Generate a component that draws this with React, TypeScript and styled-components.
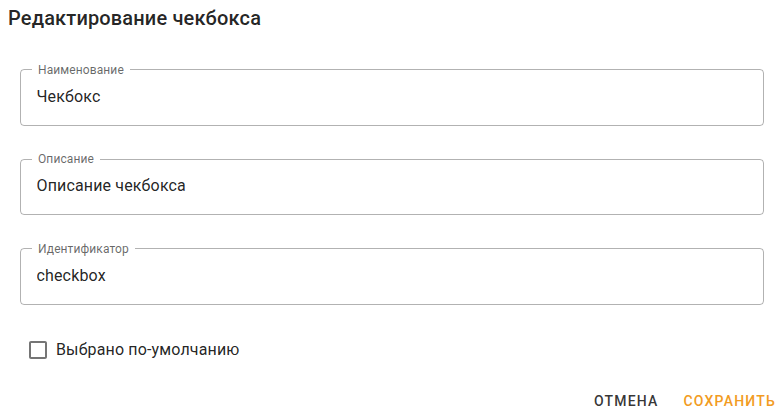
import React from 'react';
import styled, { createGlobalStyle } from 'styled-components';

const FONT = `Roboto, 'Noto Sans', 'Liberation Sans', sans-serif`;
const TEXT = 'rgba(0, 0, 0, 0.87)';
const ACCENT = '#f29b22';

const GlobalStyle = createGlobalStyle`
  html, body {
    margin: 0;
    padding: 0;
    background: #ffffff;
  }
  body {
    font-family: ${FONT};
    color: ${TEXT};
  }
`;

const Dialog = styled.div`
  width: 784px;
  height: 418px;
  display: flex;
  flex-direction: column;
  box-sizing: border-box;
  overflow: hidden;
`;

const Title = styled.h2`
  margin: 0;
  padding: 2px 8px 0;
  font-size: 20px;
  font-weight: 500;
  line-height: 32px;
  letter-spacing: 0.15px;
  color: ${TEXT};
`;

const Content = styled.div`
  display: flex;
  flex-direction: column;
  gap: 27.5px;
  padding: 29.5px 20px 0;
`;

const Field = styled.fieldset`
  margin: 0;
  padding: 0 13px 0 11px;
  min-width: 0;
  border: 1px solid rgba(0, 0, 0, 0.3);
  border-radius: 4px;
`;

const Legend = styled.legend`
  padding: 0 6px;
  font-size: 12px;
  line-height: 12px;
  color: rgba(0, 0, 0, 0.6);
  letter-spacing: 0.1px;
`;

const Input = styled.input`
  display: block;
  width: 100%;
  box-sizing: content-box;
  margin: 0;
  padding: 9px 0 17px 4.5px;
  height: 23px;
  border: 0;
  outline: none;
  background: transparent;
  font-family: ${FONT};
  font-size: 16px;
  line-height: 23px;
  color: ${TEXT};
  letter-spacing: 0.15px;
`;

const CheckRow = styled.label`
  display: flex;
  align-items: center;
  gap: 6px;
  margin: 33.5px 0 0 26px;
  height: 24px;
  font-size: 16px;
  line-height: 24px;
  letter-spacing: 0.15px;
  color: ${TEXT};
  cursor: pointer;
`;

const Actions = styled.div`
  display: flex;
  justify-content: flex-end;
  gap: 9px;
  padding: 27px 0 0 0;
`;

const Button = styled.button<{ $accent?: boolean }>`
  border: 0;
  background: transparent;
  padding: 0 8px;
  margin: 0;
  height: 24.5px;
  font-family: ${FONT};
  font-size: 14px;
  font-weight: 500;
  line-height: 24.5px;
  letter-spacing: 1.2px;
  text-transform: uppercase;
  color: ${(p) => (p.$accent ? ACCENT : 'rgba(0, 0, 0, 0.8)')};
  cursor: pointer;
`;

function CheckboxIcon() {
  return (
    <svg width="24" height="24" viewBox="0 0 24 24" fill="rgba(0,0,0,0.54)">
      <path d="M19 5v14H5V5h14m0-2H5c-1.11 0-2 .9-2 2v14c0 1.1.89 2 2 2h14c1.1 0 2-.9 2-2V5c0-1.1-.9-2-2-2z" />
    </svg>
  );
}

function TextField({ label, value }: { label: string; value: string }) {
  return (
    <Field>
      <Legend>{label}</Legend>
      <Input defaultValue={value} />
    </Field>
  );
}

export default function App() {
  return (
    <>
      <GlobalStyle />
      <Dialog>
        <Title>Редактирование чекбокса</Title>
        <Content>
          <TextField label="Наименование" value="Чекбокс" />
          <TextField label="Описание" value="Описание чекбокса" />
          <TextField label="Идентификатор" value="checkbox" />
        </Content>
        <CheckRow>
          <CheckboxIcon />
          Выбрано по-умолчанию
        </CheckRow>
        <Actions>
          <Button>Отмена</Button>
          <Button $accent>Сохранить</Button>
        </Actions>
      </Dialog>
    </>
  );
}
